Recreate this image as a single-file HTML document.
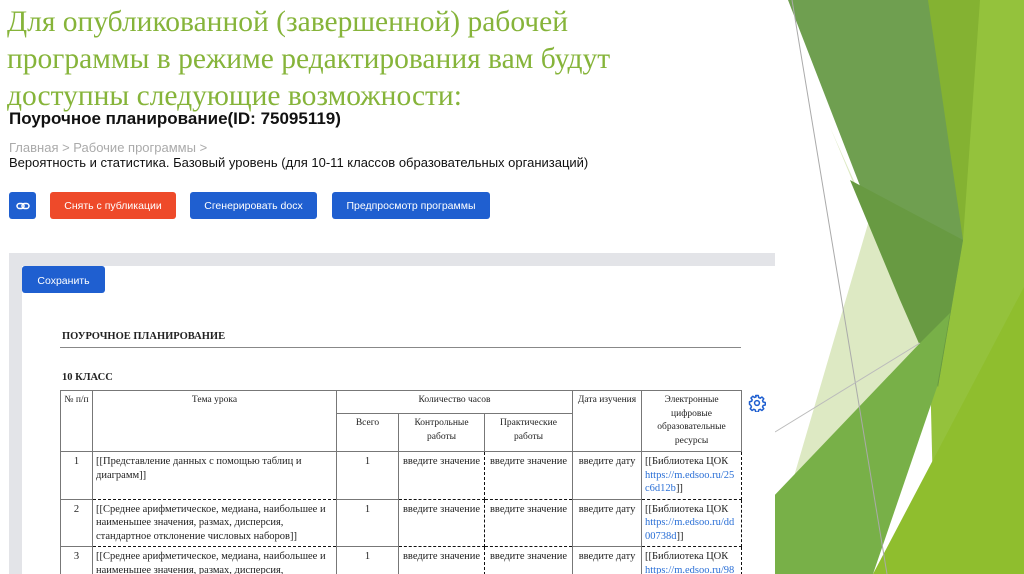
<!DOCTYPE html>
<html><head><meta charset="utf-8"><style>
*{margin:0;padding:0;box-sizing:border-box}
html,body{width:1024px;height:574px;overflow:hidden}
body{background:#fff;position:relative;font-family:"Liberation Sans",sans-serif}
.a{position:absolute;white-space:nowrap}
.t{color:#86b43a;font-family:"Liberation Serif",serif;font-size:29.5px;left:7px;line-height:37px}
.btn{position:absolute;top:192px;height:27px;border-radius:3px;background:#1f5fd0;color:#fff;font-size:10.5px;display:flex;align-items:center;justify-content:center}
.s{font-family:"Liberation Serif",serif;color:#222}
.tab{position:absolute;left:60px;top:390px;width:681px;border-collapse:collapse;font-family:"Liberation Serif",serif;font-size:10.5px;color:#222;table-layout:fixed}
.tab td{border:1px solid #777;vertical-align:top;text-align:center;padding:3px 3px;line-height:13.5px;word-wrap:break-word}
.tab td.l{text-align:left}
.tab td.d{border:1.5px dashed #111}
.tab td.sm{font-size:9.5px}
a{color:#2a6fd6;text-decoration:none;word-break:break-all}
</style></head><body>
<svg class="a" style="left:0;top:0" width="1024" height="574">
<polygon points="921,0 1024,0 1024,574 935,574" fill="#94c23c"/>
<polygon points="921,0 980,0 963,240 945,300" fill="#84b232"/>
<polygon points="830,127 920,343 790,490 870,217" fill="#dde9c3"/>
<polygon points="788,0 928,0 963,240 938,387" fill="#6f9f50"/>
<polygon points="850,180 963,240 938,387 900,300" fill="#689a42"/>
<polygon points="770,500 920,343 950,313 937,387 873,574 770,574" fill="#78b048"/>
<polygon points="873,574 1024,287 1024,574" fill="#8fbe2e"/>
<line x1="792" y1="0" x2="887" y2="574" stroke="#aaa" stroke-width="1"/>
<line x1="775" y1="432" x2="920" y2="343" stroke="#bbb" stroke-width="1"/>
</svg>
<div class="a t" style="top:4px">Для опубликованной (завершенной) рабочей</div>
<div class="a t" style="top:41px">программы в режиме редактирования вам будут</div>
<div class="a t" style="top:78px">доступны следующие возможности:</div>
<div class="a" style="left:9px;top:109px;font-size:17px;font-weight:bold;color:#111">Поурочное планирование(ID: 75095119)</div>
<div class="a" style="left:9px;top:140px;font-size:13px;color:#aaa">Главная &gt; Рабочие программы &gt;</div>
<div class="a" style="left:9px;top:155px;font-size:13px;color:#111">Вероятность и статистика. Базовый уровень (для 10-11 классов образовательных организаций)</div>
<div class="btn" style="left:9px;width:27px"><svg width="14" height="10" viewBox="0 0 14 10"><rect x="1" y="2.5" width="7" height="5" rx="2.5" fill="none" stroke="#fff" stroke-width="1.5"/><rect x="6" y="2.5" width="7" height="5" rx="2.5" fill="none" stroke="#fff" stroke-width="1.5"/></svg></div>
<div class="btn" style="left:50px;width:126px;background:#ee4a2a">Снять с публикации</div>
<div class="btn" style="left:190px;width:127px">Сгенерировать docx</div>
<div class="btn" style="left:332px;width:158px">Предпросмотр программы</div>
<div class="a" style="left:9px;top:253px;width:766px;height:330px;background:#e3e4e8"></div>
<div class="a" style="left:22px;top:266px;width:753px;height:320px;background:#fff"></div>
<div class="btn" style="left:22px;top:266px;width:83px;height:27px;padding-top:2px">Сохранить</div>
<div class="a s" style="left:62px;top:331px;font-size:10.5px;font-weight:bold">ПОУРОЧНОЕ ПЛАНИРОВАНИЕ</div>
<div class="a" style="left:60px;top:347px;width:681px;height:1px;background:#888"></div>
<div class="a s" style="left:62px;top:372px;font-size:10.5px;font-weight:bold">10 КЛАСС</div>
<table class="tab">
<colgroup><col style="width:32px"><col style="width:244px"><col style="width:62px"><col style="width:86px"><col style="width:88px"><col style="width:69px"><col style="width:100px"></colgroup>
<tr style="height:22px"><td rowspan="2" class="sm">№ п/п</td><td rowspan="2" class="sm">Тема урока</td><td colspan="3" class="sm">Количество часов</td><td rowspan="2" class="sm">Дата изучения</td><td rowspan="2" class="sm" style="line-height:13.5px">Электронные цифровые образовательные ресурсы</td></tr>
<tr style="height:36px"><td class="sm">Всего</td><td class="sm">Контрольные работы</td><td class="sm">Практические работы</td></tr>
<tr style="height:44px"><td>1</td><td class="l d">[[Представление данных с помощью таблиц и диаграмм]]</td><td>1</td><td class="d">введите значение</td><td class="d">введите значение</td><td>введите дату</td><td class="l d">[[Библиотека ЦОК<br><a>https://m.edsoo.ru/25c6d12b</a>]]</td></tr>
<tr style="height:45px"><td>2</td><td class="l d">[[Среднее арифметическое, медиана, наибольшее и наименьшее значения, размах, дисперсия, стандартное отклонение числовых наборов]]</td><td>1</td><td class="d">введите значение</td><td class="d">введите значение</td><td>введите дату</td><td class="l d">[[Библиотека ЦОК<br><a>https://m.edsoo.ru/dd00738d</a>]]</td></tr>
<tr style="height:45px"><td>3</td><td class="l d">[[Среднее арифметическое, медиана, наибольшее и наименьшее значения, размах, дисперсия, стандартное отклонение числовых наборов]]</td><td>1</td><td class="d">введите значение</td><td class="d">введите значение</td><td>введите дату</td><td class="l d">[[Библиотека ЦОК<br><a>https://m.edsoo.ru/98645f6c</a>]]</td></tr>
</table>
<div class="a" style="left:742px;top:385px;width:33px;height:40px;background:#fff"></div>
<svg class="a" style="left:748px;top:394px" width="18" height="18" viewBox="0 0 24 24"><path d="M10.3 2h3.4l.6 2.8 1.9.8 2.4-1.6 2.4 2.4-1.6 2.4.8 1.9 2.8.6v3.4l-2.8.6-.8 1.9 1.6 2.4-2.4 2.4-2.4-1.6-1.9.8-.6 2.8h-3.4l-.6-2.8-1.9-.8-2.4 1.6-2.4-2.4 1.6-2.4-.8-1.9L2 13.7v-3.4l2.8-.6.8-1.9L4 5.4 6.4 3l2.4 1.6 1.9-.8z" fill="none" stroke="#1f5fd0" stroke-width="2" stroke-linejoin="round"/><circle cx="12" cy="12" r="3.2" fill="none" stroke="#1f5fd0" stroke-width="2"/></svg>
</body></html>
